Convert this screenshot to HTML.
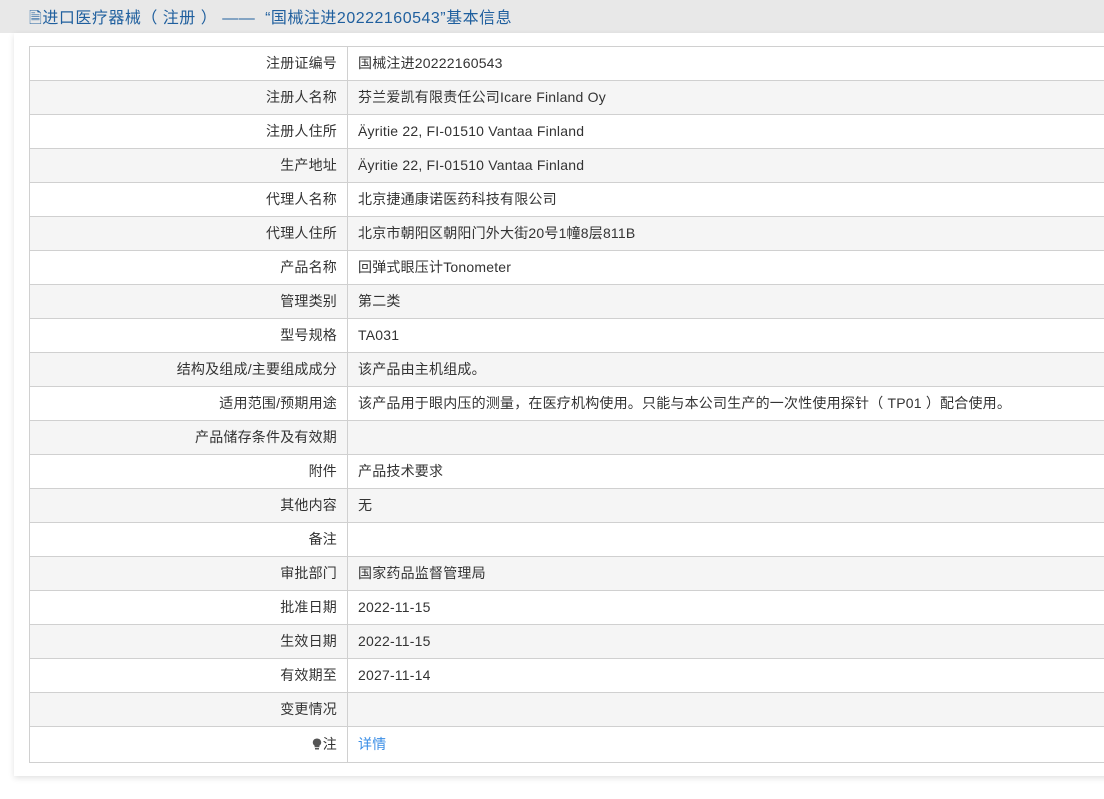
<!DOCTYPE html>
<html><head><meta charset="utf-8"><style>
html,body{margin:0;padding:0;background:#fff;width:1104px;height:799px;overflow:hidden}
body{font-family:"Liberation Sans","Noto Sans CJK SC",sans-serif;color:#333;font-size:14px}
.hd{position:absolute;left:0;top:0;width:1104px;height:33px;background:#e8e8e8;}
.hd span{position:absolute;left:29px;top:4px;font-size:16px;color:#1f5f9e;white-space:pre;letter-spacing:0.5px}
.panel{position:absolute;left:14px;top:33px;width:1100px;height:743px;background:#fff;box-shadow:0 2px 6px rgba(0,0,0,.12)}
table{position:absolute;left:29px;top:46px;border-collapse:collapse;width:1090px}
td{border:1px solid #d0d0d0;height:33px;padding:0 10px;white-space:nowrap;line-height:33px;letter-spacing:0.2px}
td.l{width:307px;text-align:right;padding-right:10px;padding-left:0}
tr:nth-child(even) td{background:#f5f5f5}
tr.last td{height:35px}
a{color:#3a8ee6;text-decoration:none}
</style></head><body>
<div class="hd"><span>🗎进口医疗器械（ 注册 ） ——  “国械注进20222160543”基本信息</span></div>
<div class="panel"></div>
<table>
<tr><td class="l">注册证编号</td><td>国械注进20222160543</td></tr>
<tr><td class="l">注册人名称</td><td>芬兰爱凯有限责任公司Icare Finland Oy</td></tr>
<tr><td class="l">注册人住所</td><td>Äyritie 22, FI-01510 Vantaa Finland</td></tr>
<tr><td class="l">生产地址</td><td>Äyritie 22, FI-01510 Vantaa Finland</td></tr>
<tr><td class="l">代理人名称</td><td>北京捷通康诺医药科技有限公司</td></tr>
<tr><td class="l">代理人住所</td><td>北京市朝阳区朝阳门外大街20号1幢8层811B</td></tr>
<tr><td class="l">产品名称</td><td>回弹式眼压计Tonometer</td></tr>
<tr><td class="l">管理类别</td><td>第二类</td></tr>
<tr><td class="l">型号规格</td><td>TA031</td></tr>
<tr><td class="l">结构及组成/主要组成成分</td><td>该产品由主机组成。</td></tr>
<tr><td class="l">适用范围/预期用途</td><td>该产品用于眼内压的测量，在医疗机构使用。只能与本公司生产的一次性使用探针（ TP01 ）配合使用。</td></tr>
<tr><td class="l">产品储存条件及有效期</td><td></td></tr>
<tr><td class="l">附件</td><td>产品技术要求</td></tr>
<tr><td class="l">其他内容</td><td>无</td></tr>
<tr><td class="l">备注</td><td></td></tr>
<tr><td class="l">审批部门</td><td>国家药品监督管理局</td></tr>
<tr><td class="l">批准日期</td><td>2022-11-15</td></tr>
<tr><td class="l">生效日期</td><td>2022-11-15</td></tr>
<tr><td class="l">有效期至</td><td>2027-11-14</td></tr>
<tr><td class="l">变更情况</td><td></td></tr>
<tr class="last"><td class="l"><svg width="10" height="12" viewBox="0 0 10 12" style="vertical-align:-1px;margin-right:1px"><path d="M5 0.5C2.5 0.5 0.8 2.3 0.8 4.5c0 1.6 1 2.5 1.8 3.3v1.5h4.8V7.8c0.8-0.8 1.8-1.7 1.8-3.3C9.2 2.3 7.5 0.5 5 0.5z" fill="#555"/><rect x="3" y="10" width="4" height="1.5" fill="#555"/></svg>注</td><td><a>详情</a></td></tr>
</table>
</body></html>
